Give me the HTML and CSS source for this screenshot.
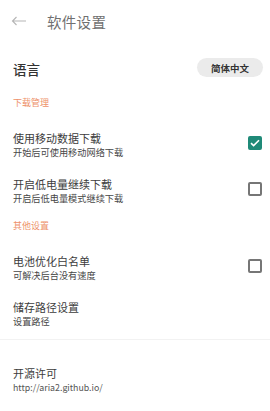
FILE: index.html
```html
<!DOCTYPE html>
<html lang="zh-CN">
  <head>
    <meta charset="UTF-8" />
    <meta name="viewport" content="width=device-width, initial-scale=1.0" />
    <title>软件设置</title>
    <link rel="stylesheet" href="styles.css">
  </head>
  <body>
    <div class="header">
      <svg class="back-icon" width="16" height="10" viewBox="0 0 16 10">
        <path d="M15 5H1.5M5.5 1L1.5 5l4 4" fill="none" stroke="#b5b5b5" stroke-width="1.1" />
      </svg>
      <div class="header-title">软件设置</div>
    </div>

    <div class="lang-row">
      <div class="lang-label">语言</div>
      <button class="lang-btn">简体中文</button>
    </div>

    <div class="section-title">下载管理</div>

    <div class="item">
      <div class="item-text">
        <div class="item-title">使用移动数据下载</div>
        <div class="item-sub">开始后可使用移动网络下载</div>
      </div>
      <div class="checkbox checked">
        <svg width="10" height="8" viewBox="0 0 10 8">
          <path d="M1 4.2l2.6 2.4L9 1.2" fill="none" stroke="#fff" stroke-width="1.6" />
        </svg>
      </div>
    </div>

    <div class="item">
      <div class="item-text">
        <div class="item-title">开启低电量继续下载</div>
        <div class="item-sub">开启后低电量模式继续下载</div>
      </div>
      <div class="checkbox"></div>
    </div>

    <div class="section-title">其他设置</div>

    <div class="item">
      <div class="item-text">
        <div class="item-title">电池优化白名单</div>
        <div class="item-sub">可解决后台没有速度</div>
      </div>
      <div class="checkbox"></div>
    </div>

    <div class="item">
      <div class="item-text">
        <div class="item-title">储存路径设置</div>
        <div class="item-sub">设置路径</div>
      </div>
    </div>

    <div class="divider"></div>

    <div class="item about">
      <div class="item-text">
        <div class="item-title">开源许可</div>
        <div class="item-sub url">http://aria2.github.io/</div>
      </div>
    </div>
  </body>
</html>
```

FILE: styles.css
```css
* {
  margin: 0;
  padding: 0;
  box-sizing: border-box;
}

body {
  font-family: "Noto Sans CJK SC", "Noto Sans", sans-serif;
  background: #fff;
  width: 270px;
  min-height: 411px;
  overflow: hidden;
}

.header {
  height: 44px;
  display: flex;
  align-items: center;
  padding-left: 11px;
}

.back-icon {
  display: block;
  margin-top: -2px;
}

.header-title {
  margin-left: 20px;
  font-size: 14.5px;
  line-height: 20px;
  color: #707070;
  letter-spacing: 0.3px;
}

.lang-row {
  height: 47px;
  display: flex;
  align-items: center;
  justify-content: space-between;
  padding: 0 7px 0 13px;
}

.lang-label {
  font-size: 13.5px;
  font-weight: 500;
  color: #333;
  line-height: 18px;
  margin-top: 2px;
}

.lang-btn {
  width: 66px;
  height: 19px;
  border: none;
  border-radius: 10px;
  background: #ebebeb;
  font-family: inherit;
  font-size: 9.5px;
  font-weight: bold;
  color: #333;
}

.section-title {
  padding: 5px 13px 12px;
  font-size: 9px;
  line-height: 14px;
  color: #ee916a;
}

.item {
  height: 46px;
  display: flex;
  align-items: center;
  justify-content: space-between;
  padding: 0 8px 0 13px;
}

.item-title {
  font-size: 11px;
  line-height: 15px;
  color: #3c3c3c;
}

.item-sub {
  font-size: 9.2px;
  line-height: 13px;
  color: #474747;
}

.url {
  font-size: 8.8px;
  color: #555;
}

.checkbox {
  width: 14px;
  height: 14px;
  border: 2px solid #767676;
  border-radius: 2px;
  display: flex;
  align-items: center;
  justify-content: center;
  margin-top: -4px;
}

.checkbox.checked {
  background: #1f8a78;
  border-color: #1f8a78;
}

.divider {
  height: 1px;
  background: #f2f2f2;
  margin-top: 2px;
}

.about {
  margin-top: 17px;
}
```
